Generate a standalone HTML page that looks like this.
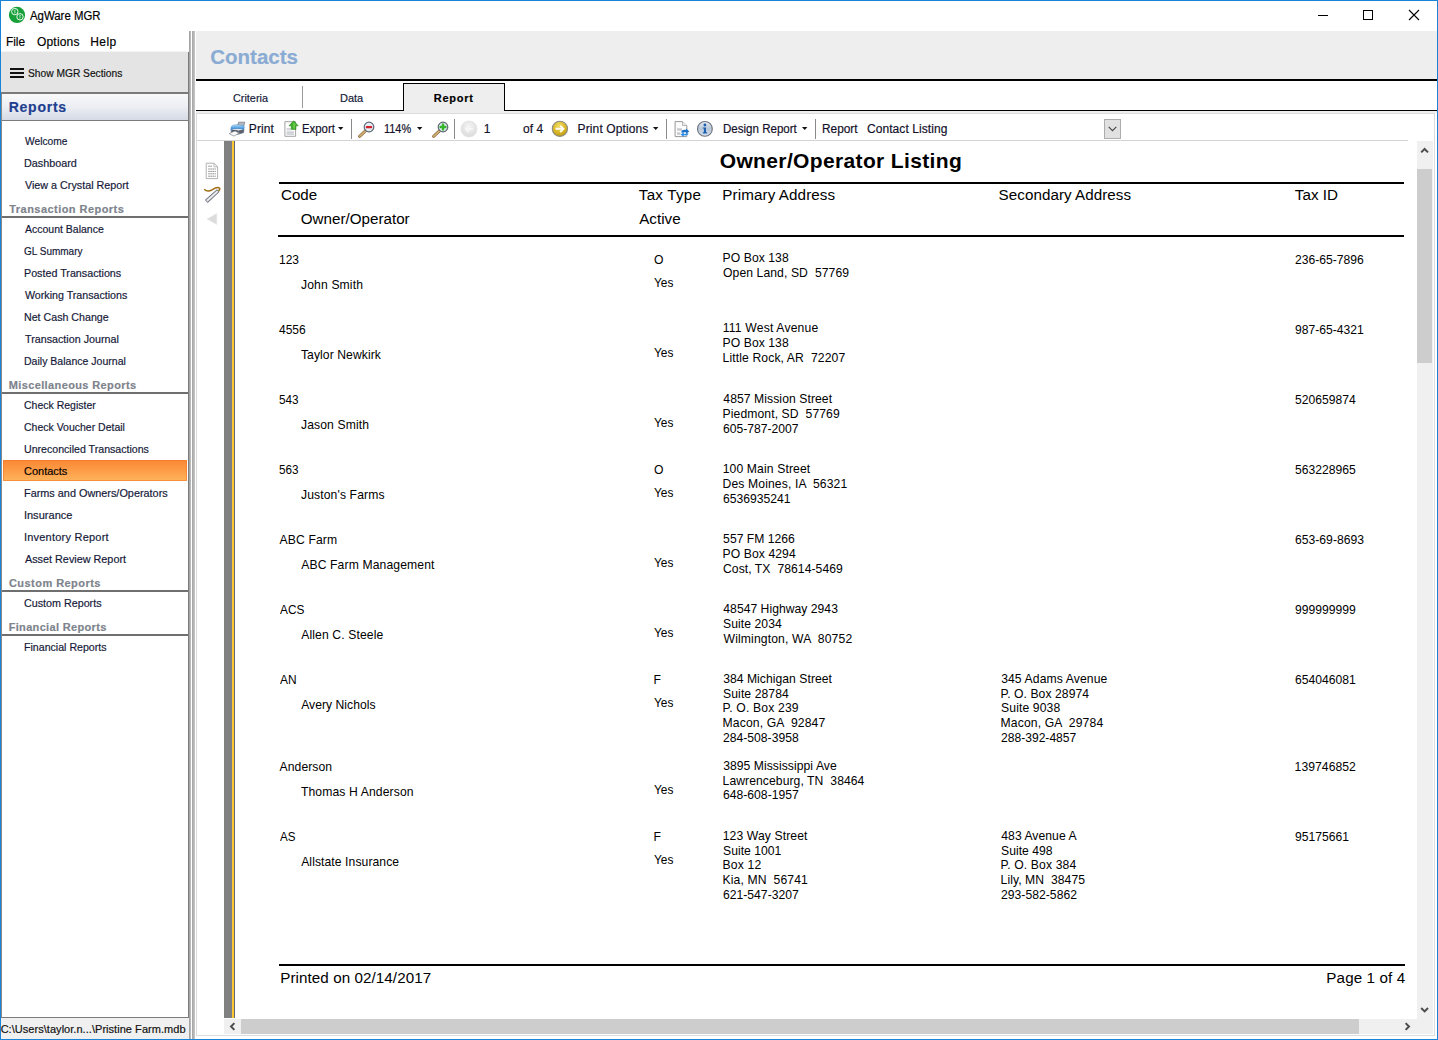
<!DOCTYPE html><html><head><meta charset="utf-8"><title>AgWare MGR</title><style>
html,body{margin:0;padding:0;}body{width:1438px;height:1040px;position:relative;overflow:hidden;background:#fff;font-family:"Liberation Sans", sans-serif;}
.t{position:absolute;white-space:pre;transform-origin:0 0;-webkit-text-stroke:0.18px;}.b{position:absolute;}svg{position:absolute;overflow:visible;}
</style></head><body>
<span class="t" style="left:30.38px;top:9px;font-size:12px;line-height:14px;color:#000;transform:scaleX(0.9501);">AgWare MGR</span>
<svg style="left:8px;top:6px" width="18" height="18" viewBox="0 0 18 18"><circle cx="9" cy="8.9" r="8.1" fill="#17a03a"/><circle cx="6.8" cy="5.6" r="3.2" fill="none" stroke="#eaf7ec" stroke-width="1"/><circle cx="12" cy="10.8" r="3.2" fill="none" stroke="#eaf7ec" stroke-width="1"/><path d="M7.6 4.4C6.6 3.8 5.8 4.6 6.8 5.6C7.8 6.4 7 7.2 6 6.8M12.8 9.6C11.8 9 11 9.8 12 10.8C13 11.6 12.2 12.4 11.2 12" fill="none" stroke="#d8f0dc" stroke-width=".8"/></svg>
<div class="b" style="left:1318px;top:15px;width:10px;height:1px;background:#000;"></div>
<div class="b" style="left:1363px;top:10px;width:10px;height:10px;background:transparent;border:1px solid #000;box-sizing:border-box;"></div>
<svg style="left:1409px;top:10px" width="10" height="10" viewBox="0 0 10 10"><path d="M0 0L10 10M10 0L0 10" stroke="#000" stroke-width="1.1"/></svg>
<span class="t" style="left:6.43px;top:35px;font-size:12px;line-height:14px;color:#000;transform:scaleX(0.9877);">File</span>
<span class="t" style="left:37.03px;top:35px;font-size:12px;line-height:14px;color:#000;letter-spacing:0.174px;">Options</span>
<span class="t" style="left:90.22px;top:35px;font-size:12px;line-height:14px;color:#000;letter-spacing:0.436px;">Help</span>
<div class="b" style="left:1px;top:51px;width:188px;height:1px;background:#f4f4f4;"></div>
<div class="b" style="left:1px;top:52px;width:187px;height:40px;background:#e4e4e4;"></div>
<div class="b" style="left:1px;top:92px;width:188px;height:2px;background:#7b7b7b;"></div>
<div class="b" style="left:10px;top:68px;width:14px;height:2px;background:#111;"></div>
<div class="b" style="left:10px;top:72px;width:14px;height:2px;background:#111;"></div>
<div class="b" style="left:10px;top:76px;width:14px;height:2px;background:#111;"></div>
<span class="t" style="left:28.14px;top:67px;font-size:11px;line-height:12px;color:#111;transform:scaleX(0.9296);">Show MGR Sections</span>
<div class="b" style="left:2px;top:94px;width:186px;height:26px;background:linear-gradient(#f9f9fa,#eceef3 50%,#d5dae5);"></div>
<div class="b" style="left:1px;top:120px;width:188px;height:1px;background:#7b7b7b;"></div>
<span class="t" style="left:8.76px;top:99px;font-size:14px;line-height:16px;color:#1f3f8f;font-weight:700;letter-spacing:0.736px;">Reports</span>
<div class="b" style="left:1px;top:94px;width:1px;height:923px;background:#8a8a8a;"></div>
<div class="b" style="left:188px;top:52px;width:1px;height:965px;background:#7b7b7b;"></div>
<span class="t" style="left:24.86px;top:135px;font-size:11px;line-height:12px;color:#141838;transform:scaleX(0.9293);">Welcome</span>
<span class="t" style="left:24.01px;top:157px;font-size:11px;line-height:12px;color:#141838;transform:scaleX(0.9808);">Dashboard</span>
<span class="t" style="left:24.85px;top:179px;font-size:11px;line-height:12px;color:#141838;transform:scaleX(0.978);">View a Crystal Report</span>
<span class="t" style="left:9.28px;top:203px;font-size:11px;line-height:12px;color:#7d838c;font-weight:700;letter-spacing:0.456px;">Transaction Reports</span>
<div class="b" style="left:2px;top:216px;width:186px;height:2px;background:#6f6f6f;"></div>
<span class="t" style="left:24.88px;top:223px;font-size:11px;line-height:12px;color:#141838;transform:scaleX(0.9544);">Account Balance</span>
<span class="t" style="left:24.4px;top:245px;font-size:11px;line-height:12px;color:#141838;transform:scaleX(0.9079);">GL Summary</span>
<span class="t" style="left:24.02px;top:267px;font-size:11px;line-height:12px;color:#141838;transform:scaleX(0.975);">Posted Transactions</span>
<span class="t" style="left:24.85px;top:289px;font-size:11px;line-height:12px;color:#141838;transform:scaleX(0.9686);">Working Transactions</span>
<span class="t" style="left:24.03px;top:311px;font-size:11px;line-height:12px;color:#141838;transform:scaleX(0.968);">Net Cash Change</span>
<span class="t" style="left:24.66px;top:333px;font-size:11px;line-height:12px;color:#141838;transform:scaleX(0.9757);">Transaction Journal</span>
<span class="t" style="left:24.04px;top:355px;font-size:11px;line-height:12px;color:#141838;transform:scaleX(0.9575);">Daily Balance Journal</span>
<span class="t" style="left:8.66px;top:379px;font-size:11px;line-height:12px;color:#7d838c;font-weight:700;letter-spacing:0.384px;">Miscellaneous Reports</span>
<div class="b" style="left:2px;top:392px;width:186px;height:2px;background:#6f6f6f;"></div>
<span class="t" style="left:24.37px;top:399px;font-size:11px;line-height:12px;color:#141838;transform:scaleX(0.9536);">Check Register</span>
<span class="t" style="left:24.37px;top:421px;font-size:11px;line-height:12px;color:#141838;transform:scaleX(0.9544);">Check Voucher Detail</span>
<span class="t" style="left:24.08px;top:443px;font-size:11px;line-height:12px;color:#141838;transform:scaleX(0.9637);">Unreconciled Transactions</span>
<div class="b" style="left:3px;top:460px;width:184px;height:21px;background:linear-gradient(#fb8835,#fd9a45 45%,#ffb45c);box-shadow:inset 0 0 0 1px rgba(240,120,40,.6);"></div>
<span class="t" style="left:24.34px;top:465px;font-size:11px;line-height:12px;color:#000;transform:scaleX(0.9987);">Contacts</span>
<span class="t" style="left:24.01px;top:487px;font-size:11px;line-height:12px;color:#141838;transform:scaleX(0.9876);">Farms and Owners/Operators</span>
<span class="t" style="left:23.88px;top:509px;font-size:11px;line-height:12px;color:#141838;letter-spacing:0.037px;">Insurance</span>
<span class="t" style="left:23.88px;top:531px;font-size:11px;line-height:12px;color:#141838;letter-spacing:0.232px;">Inventory Report</span>
<span class="t" style="left:24.88px;top:553px;font-size:11px;line-height:12px;color:#141838;transform:scaleX(0.9834);">Asset Review Report</span>
<span class="t" style="left:8.95px;top:577px;font-size:11px;line-height:12px;color:#7d838c;font-weight:700;letter-spacing:0.457px;">Custom Reports</span>
<div class="b" style="left:2px;top:590px;width:186px;height:2px;background:#6f6f6f;"></div>
<span class="t" style="left:24.36px;top:597px;font-size:11px;line-height:12px;color:#141838;transform:scaleX(0.9756);">Custom Reports</span>
<span class="t" style="left:8.66px;top:621px;font-size:11px;line-height:12px;color:#7d838c;font-weight:700;letter-spacing:0.331px;">Financial Reports</span>
<div class="b" style="left:2px;top:634px;width:186px;height:2px;background:#6f6f6f;"></div>
<span class="t" style="left:24.03px;top:641px;font-size:11px;line-height:12px;color:#141838;transform:scaleX(0.9645);">Financial Reports</span>
<div class="b" style="left:1px;top:1017px;width:188px;height:1px;background:#7b7b7b;"></div>
<div class="b" style="left:1px;top:1018px;width:188px;height:21px;background:#f0f0f0;"></div>
<span class="t" style="left:0.64px;top:1023px;font-size:11px;line-height:12px;color:#111;letter-spacing:0.041px;">C:\Users\taylor.n...\Pristine Farm.mdb</span>
<div class="b" style="left:189px;top:31px;width:2px;height:1008px;background:linear-gradient(90deg,#9a9a9a,#c4c4c4);"></div>
<div class="b" style="left:192px;top:31px;width:3px;height:1008px;background:linear-gradient(90deg,#a4a4a4,#c8c8c8);"></div>
<div class="b" style="left:196px;top:31px;width:1241px;height:48px;background:#eeeeee;"></div>
<div class="b" style="left:196px;top:79px;width:1241px;height:2px;background:#000;"></div>
<span class="t" style="left:210.16px;top:45px;font-size:20.5px;line-height:23px;color:#8aabd3;font-weight:700;letter-spacing:0.011px;">Contacts</span>
<div class="b" style="left:196px;top:110px;width:208px;height:1px;background:#000;"></div>
<div class="b" style="left:504px;top:110px;width:933px;height:1px;background:#000;"></div>
<div class="b" style="left:302px;top:86px;width:1px;height:22px;background:#9a9a9a;"></div>
<div class="b" style="left:403px;top:83px;width:102px;height:30px;background:#eeeeee;border:1px solid #000;border-bottom:none;box-sizing:border-box;"></div>
<div class="b" style="left:196px;top:111px;width:1241px;height:2px;background:#eeeeee;"></div>
<span class="t" style="left:233.25px;top:92px;font-size:11px;line-height:12px;color:#141838;transform:scaleX(0.9859);">Criteria</span>
<span class="t" style="left:339.9px;top:92px;font-size:11px;line-height:12px;color:#141838;transform:scaleX(0.9985);">Data</span>
<span class="t" style="left:433.76px;top:92px;font-size:11px;line-height:12px;color:#000;font-weight:700;letter-spacing:0.765px;">Report</span>
<div class="b" style="left:196px;top:113px;width:1239px;height:923px;background:transparent;border:1px solid #dcdcdc;box-sizing:border-box;"></div>
<div class="b" style="left:197px;top:140px;width:1211px;height:1px;background:#d4d4d4;"></div>
<svg style="left:228px;top:121px" width="18" height="16" viewBox="0 0 18 16"><defs><linearGradient id="pb" x1="0" y1="0" x2="0" y2="1"><stop offset="0" stop-color="#b5dcf8"/><stop offset=".45" stop-color="#6db3ea"/><stop offset="1" stop-color="#2f80cc"/></linearGradient></defs><path d="M10.6 1.2H16.8L15.7 5.2H9.5Z" fill="#b3b7be" stroke="#7b8089" stroke-width=".8"/><path d="M3 8.2C7 6.8 12 7 15.9 8.1L15.6 11.6L9.8 13.4L3.3 11.8Z" fill="#e6eaf0" stroke="#5f6672" stroke-width=".7"/><path d="M10.6 9.4L15.8 8.4L15.5 11.5L10.2 13.1Z" fill="#59606c"/><path d="M3.3 9.4C6 8.8 9 9 10.8 10L10.3 12.4L3.5 11.3Z" fill="#434a57"/><path d="M3 6.4C3.4 4.4 6 3.5 9.2 3.7C12.6 3.9 15.8 4.4 16.4 5.6L15.9 8.5C12 7.3 7 7.1 2.9 8.7Z" fill="url(#pb)" stroke="#3f82c4" stroke-width=".4"/><path d="M1.1 12.6L7 9.9L11.1 12L6 15.1Z" fill="#fcfcfc" stroke="#8b9098" stroke-width=".8"/></svg>
<span class="t" style="left:248.82px;top:122px;font-size:12px;line-height:14px;color:#12102a;letter-spacing:0.1px;">Print</span>
<svg style="left:284px;top:120px" width="15" height="18" viewBox="0 0 15 18"><path d="M.9 1.7H11.6V16.3H.9Z" fill="#fdfdfd" stroke="#a3a3a3" stroke-width="1"/><rect x="2.6" y="8" width="4.4" height="2.4" fill="#d4d6da"/><rect x="2.6" y="11.4" width="7.4" height="3.4" fill="#c9ccd1"/><rect x="2.6" y="12.8" width="7.4" height=".6" fill="#e6e8ea"/><path d="M9.6 .8L14.2 5.8H11.9V9.4H7.3V5.8H5Z" fill="#3fae2a" stroke="#2a8a1c" stroke-width=".6"/><path d="M9.6 2.2L12.2 5.2H10.9V8.4H9.2V3Z" fill="#7ed957" opacity=".7"/></svg>
<span class="t" style="left:301.67px;top:122px;font-size:12px;line-height:14px;color:#12102a;transform:scaleX(0.9462);">Export</span>
<svg style="left:337.5px;top:127px" width="6" height="3" viewBox="0 0 6 3"><path d="M0 0H5.4L2.7 3Z" fill="#111"/></svg>
<div class="b" style="left:351px;top:119px;width:1px;height:20px;background:#8a8a8a;"></div>
<svg style="left:357.5px;top:120.5px" width="17" height="17" viewBox="0 0 17 17"><path d="M7.2 10.2L1.6 15.3" stroke="#8a6a38" stroke-width="3" stroke-linecap="round"/><path d="M7.2 10.2L1.8 15.1" stroke="#d4b078" stroke-width="1.6" stroke-linecap="round"/><circle cx="11" cy="6" r="4.8" fill="#e4ecf4" stroke="#5f6773" stroke-width="1.2"/><rect x="7.8" y="4.9" width="6.4" height="2.3" rx=".8" fill="#d2202c"/></svg>
<span class="t" style="left:384.17px;top:122px;font-size:12px;line-height:14px;color:#12102a;transform:scaleX(0.9097);">114%</span>
<svg style="left:416.8px;top:127px" width="6" height="3" viewBox="0 0 6 3"><path d="M0 0H5.4L2.7 3Z" fill="#111"/></svg>
<svg style="left:431.5px;top:120.5px" width="17" height="17" viewBox="0 0 17 17"><path d="M7.2 10.2L1.6 15.3" stroke="#8a6a38" stroke-width="3" stroke-linecap="round"/><path d="M7.2 10.2L1.8 15.1" stroke="#d4b078" stroke-width="1.6" stroke-linecap="round"/><circle cx="11" cy="6" r="4.8" fill="#e4ecf4" stroke="#5f6773" stroke-width="1.2"/><path d="M9.8 2.5H12.2V4.8H14.5V7.2H12.2V9.5H9.8V7.2H7.5V4.8H9.8Z" fill="#35b52a"/></svg>
<div class="b" style="left:454px;top:119px;width:1px;height:20px;background:#8a8a8a;"></div>
<svg style="left:460px;top:120px" width="18" height="18" viewBox="0 0 18 18"><defs><radialGradient id="gb" cx=".5" cy=".35" r=".7"><stop offset="0" stop-color="#f4f4f4"/><stop offset="1" stop-color="#d9d9d9"/></radialGradient></defs><circle cx="9" cy="9" r="8" fill="url(#gb)" stroke="#e2e2e2" stroke-width=".8"/><path d="M12.6 9H6.2M8.8 6L5.8 9L8.8 12" fill="none" stroke="#f6f6f6" stroke-width="1.8"/></svg>
<span class="t" style="left:483.69px;top:122px;font-size:12px;line-height:14px;color:#12102a;">1</span>
<span class="t" style="left:523.1px;top:122px;font-size:12px;line-height:14px;color:#12102a;letter-spacing:0.013px;">of 4</span>
<svg style="left:551px;top:120px" width="18" height="18" viewBox="0 0 18 18"><defs><radialGradient id="gg" cx=".45" cy=".3" r=".75"><stop offset="0" stop-color="#f1dc62"/><stop offset=".6" stop-color="#d9b526"/><stop offset="1" stop-color="#b8950f"/></radialGradient></defs><circle cx="8.9" cy="8.8" r="7.6" fill="url(#gg)" stroke="#8d8c80" stroke-width="1.1"/><path d="M4.6 8.8H12M9.2 5.6L12.4 8.8L9.2 12" fill="none" stroke="#fffef4" stroke-width="1.9"/></svg>
<span class="t" style="left:577.62px;top:122px;font-size:12px;line-height:14px;color:#12102a;letter-spacing:0.113px;">Print Options</span>
<svg style="left:652.6px;top:127px" width="6" height="3" viewBox="0 0 6 3"><path d="M0 0H5.4L2.7 3Z" fill="#111"/></svg>
<div class="b" style="left:666px;top:119px;width:1px;height:20px;background:#8a8a8a;"></div>
<svg style="left:674px;top:121px" width="16" height="17" viewBox="0 0 16 17"><path d="M1.1 .6H8.5L12.8 4.5V15.6H1.1Z" fill="#fcfcfc" stroke="#989898" stroke-width="1"/><path d="M8.5 .6V4.5H12.8" fill="#f0f0f0" stroke="#a4a4a4" stroke-width=".8"/><rect x="3" y="7.3" width="4.9" height="2.3" fill="#c4c6ca"/><rect x="3" y="11.3" width="3.4" height="2.6" fill="#c9cbce"/><path d="M7.6 9.6C9 8.7 10.8 8.6 12.2 8.9V7.6L15.3 10.4L12.2 12.8V11.4C10.6 11 9 11.2 7.6 12Z" fill="#1b6ec6"/><path d="M14.2 13.6C12.8 14.5 11 14.6 9.8 14.3V16L6.6 13.6L9.8 11.3V12.7C11.2 12.9 12.8 12.6 14.2 11.9Z" fill="#2f8fe6"/></svg>
<svg style="left:696px;top:120px" width="18" height="18" viewBox="0 0 18 18"><defs><linearGradient id="gi" x1="0" y1="0" x2="0" y2="1"><stop offset="0" stop-color="#e8edf3"/><stop offset=".5" stop-color="#b7c5d6"/><stop offset="1" stop-color="#dde4ec"/></linearGradient></defs><circle cx="8.9" cy="8.9" r="7.4" fill="url(#gi)" stroke="#6c747f" stroke-width="1.1"/><circle cx="8.9" cy="5" r="1.4" fill="#1a5fb0"/><path d="M6.8 7.4H10V12.2H11.2V13.4H6.8V12.2H7.9V8.6H6.8Z" fill="#1a5fb0"/></svg>
<span class="t" style="left:722.85px;top:122px;font-size:12px;line-height:14px;color:#12102a;transform:scaleX(0.9625);">Design Report</span>
<svg style="left:801.6px;top:127px" width="6" height="3" viewBox="0 0 6 3"><path d="M0 0H5.4L2.7 3Z" fill="#111"/></svg>
<div class="b" style="left:815px;top:119px;width:1px;height:20px;background:#8a8a8a;"></div>
<span class="t" style="left:822.43px;top:122px;font-size:12px;line-height:14px;color:#12102a;transform:scaleX(0.9873);">Report</span>
<span class="t" style="left:866.99px;top:122px;font-size:12px;line-height:14px;color:#12102a;letter-spacing:0.072px;">Contact Listing</span>
<div class="b" style="left:1104px;top:119px;width:17px;height:20px;background:#e1e1e1;border:1px solid #adadad;box-sizing:border-box;"></div>
<svg style="left:1108px;top:126px" width="9" height="6" viewBox="0 0 9 6"><path d="M.7 .8L4.5 4.6L8.3 .8" fill="none" stroke="#444" stroke-width="1.1"/></svg>
<svg style="left:205px;top:162px" width="14" height="18" viewBox="0 0 14 18"><path d="M1.2 1.2H9L12.6 4.8V16.6H1.2Z" fill="#fff" stroke="#a8a8a8" stroke-width=".9"/><path d="M9 1.2V4.8H12.6" fill="none" stroke="#a8a8a8" stroke-width=".8"/><path d="M3.2 4.2H7.4M3.2 7H10.8M3.2 9.4H10.8M3.2 11.8H10.8M3.2 14.2H10.8" stroke="#8c8c8c" stroke-width="1" stroke-dasharray="1.6 .5"/></svg>
<svg style="left:203px;top:185px" width="18" height="19" viewBox="0 0 18 19"><path d="M16.2 6.6L14 4.8L2.4 15L4.8 17.4Z" fill="#c4c8cf" stroke="#565c66" stroke-width=".9"/><path d="M14.6 6.2L4 15.6" stroke="#f2f3f5" stroke-width="1.2"/><path d="M1.2 4.2C3 6 6.2 6.4 9 4.8C11.6 3.2 14.8 1.4 16.6 3.2C17.2 4 16.4 5.4 15.4 5.6" fill="none" stroke="#a06c14" stroke-width="1.5"/></svg>
<svg style="left:206px;top:212px" width="12" height="14" viewBox="0 0 12 14"><path d="M1 7L10.8 1.4V12.4Z" fill="#dcdcdc" stroke="#e8e8e8" stroke-width=".6"/></svg>
<div class="b" style="left:224px;top:141px;width:8px;height:877px;background:#808080;"></div>
<div class="b" style="left:231px;top:141px;width:1px;height:877px;background:#7a7e88;"></div>
<div class="b" style="left:232px;top:141px;width:2px;height:877px;background:#fdc832;"></div>
<div class="b" style="left:234px;top:141px;width:1px;height:877px;background:#66666e;"></div>
<span class="t" style="left:719.74px;top:149px;font-size:21px;line-height:23px;color:#000;font-weight:700;letter-spacing:0.359px;-webkit-text-stroke:0;">Owner/Operator Listing</span>
<div class="b" style="left:279px;top:182px;width:1125px;height:2px;background:#000;"></div>
<div class="b" style="left:278px;top:235px;width:1126px;height:2px;background:#000;"></div>
<div class="b" style="left:279px;top:964px;width:1126px;height:2px;background:#000;"></div>
<span class="t" style="left:281.03px;top:186px;font-size:15.2px;line-height:17px;color:#000;transform:scaleX(0.9945);-webkit-text-stroke:0;">Code</span>
<span class="t" style="left:300.78px;top:210px;font-size:15.2px;line-height:17px;color:#000;-webkit-text-stroke:0;">Owner/Operator</span>
<span class="t" style="left:638.86px;top:186px;font-size:15.2px;line-height:17px;color:#000;letter-spacing:0.209px;-webkit-text-stroke:0;">Tax Type</span>
<span class="t" style="left:639.17px;top:210px;font-size:15.2px;line-height:17px;color:#000;letter-spacing:0.023px;-webkit-text-stroke:0;">Active</span>
<span class="t" style="left:722.35px;top:186px;font-size:15.2px;line-height:17px;color:#000;letter-spacing:0.097px;-webkit-text-stroke:0;">Primary Address</span>
<span class="t" style="left:998.61px;top:186px;font-size:15.2px;line-height:17px;color:#000;letter-spacing:0.049px;-webkit-text-stroke:0;">Secondary Address</span>
<span class="t" style="left:1294.86px;top:186px;font-size:15.2px;line-height:17px;color:#000;letter-spacing:0.021px;-webkit-text-stroke:0;">Tax ID</span>
<span class="t" style="left:280.25px;top:969px;font-size:15.2px;line-height:17px;color:#000;letter-spacing:0.071px;-webkit-text-stroke:0;">Printed on 02/14/2017</span>
<span class="t" style="left:1326.35px;top:969px;font-size:15.2px;line-height:17px;color:#000;letter-spacing:0.114px;-webkit-text-stroke:0;">Page 1 of 4</span>
<span class="t" style="left:278.68px;top:253px;font-size:12.16px;line-height:14px;color:#000;transform:scaleX(0.9879);-webkit-text-stroke:0;">123</span>
<span class="t" style="left:301.01px;top:278px;font-size:12.16px;line-height:14px;color:#000;letter-spacing:0.128px;-webkit-text-stroke:0;">John Smith</span>
<span class="t" style="left:654.02px;top:253px;font-size:12.16px;line-height:14px;color:#000;-webkit-text-stroke:0;">O</span>
<span class="t" style="left:654.14px;top:276px;font-size:12.16px;line-height:14px;color:#000;transform:scaleX(0.9779);-webkit-text-stroke:0;">Yes</span>
<span class="t" style="left:722.6px;top:251px;font-size:12.16px;line-height:14px;color:#000;letter-spacing:0.062px;-webkit-text-stroke:0;">PO Box 138</span>
<span class="t" style="left:723.02px;top:266px;font-size:12.16px;line-height:14px;color:#000;letter-spacing:0.087px;-webkit-text-stroke:0;">Open Land, SD  57769</span>
<span class="t" style="left:1294.89px;top:253px;font-size:12.16px;line-height:14px;color:#000;transform:scaleX(0.9968);-webkit-text-stroke:0;">236-65-7896</span>
<span class="t" style="left:279.32px;top:323px;font-size:12.16px;line-height:14px;color:#000;transform:scaleX(0.9871);-webkit-text-stroke:0;">4556</span>
<span class="t" style="left:300.93px;top:348px;font-size:12.16px;line-height:14px;color:#000;letter-spacing:0.074px;-webkit-text-stroke:0;">Taylor Newkirk</span>
<span class="t" style="left:654.14px;top:346px;font-size:12.16px;line-height:14px;color:#000;transform:scaleX(0.9779);-webkit-text-stroke:0;">Yes</span>
<span class="t" style="left:722.67px;top:321px;font-size:12.16px;line-height:14px;color:#000;letter-spacing:0.184px;-webkit-text-stroke:0;">111 West Avenue</span>
<span class="t" style="left:722.6px;top:336px;font-size:12.16px;line-height:14px;color:#000;letter-spacing:0.062px;-webkit-text-stroke:0;">PO Box 138</span>
<span class="t" style="left:722.6px;top:351px;font-size:12.16px;line-height:14px;color:#000;letter-spacing:0.111px;-webkit-text-stroke:0;">Little Rock, AR  72207</span>
<span class="t" style="left:1294.93px;top:323px;font-size:12.16px;line-height:14px;color:#000;transform:scaleX(0.997);-webkit-text-stroke:0;">987-65-4321</span>
<span class="t" style="left:279.13px;top:393px;font-size:12.16px;line-height:14px;color:#000;transform:scaleX(0.9654);-webkit-text-stroke:0;">543</span>
<span class="t" style="left:301.01px;top:418px;font-size:12.16px;line-height:14px;color:#000;letter-spacing:0.107px;-webkit-text-stroke:0;">Jason Smith</span>
<span class="t" style="left:654.14px;top:416px;font-size:12.16px;line-height:14px;color:#000;transform:scaleX(0.9779);-webkit-text-stroke:0;">Yes</span>
<span class="t" style="left:723.32px;top:392px;font-size:12.16px;line-height:14px;color:#000;letter-spacing:0.072px;-webkit-text-stroke:0;">4857 Mission Street</span>
<span class="t" style="left:722.6px;top:407px;font-size:12.16px;line-height:14px;color:#000;letter-spacing:0.088px;-webkit-text-stroke:0;">Piedmont, SD  57769</span>
<span class="t" style="left:722.98px;top:422px;font-size:12.16px;line-height:14px;color:#000;transform:scaleX(0.9987);-webkit-text-stroke:0;">605-787-2007</span>
<span class="t" style="left:1295.01px;top:393px;font-size:12.16px;line-height:14px;color:#000;transform:scaleX(0.9963);-webkit-text-stroke:0;">520659874</span>
<span class="t" style="left:279.13px;top:463px;font-size:12.16px;line-height:14px;color:#000;transform:scaleX(0.9654);-webkit-text-stroke:0;">563</span>
<span class="t" style="left:301.01px;top:488px;font-size:12.16px;line-height:14px;color:#000;letter-spacing:0.113px;-webkit-text-stroke:0;">Juston's Farms</span>
<span class="t" style="left:654.02px;top:463px;font-size:12.16px;line-height:14px;color:#000;-webkit-text-stroke:0;">O</span>
<span class="t" style="left:654.14px;top:486px;font-size:12.16px;line-height:14px;color:#000;transform:scaleX(0.9779);-webkit-text-stroke:0;">Yes</span>
<span class="t" style="left:722.67px;top:462px;font-size:12.16px;line-height:14px;color:#000;letter-spacing:0.126px;-webkit-text-stroke:0;">100 Main Street</span>
<span class="t" style="left:722.6px;top:477px;font-size:12.16px;line-height:14px;color:#000;letter-spacing:0.114px;-webkit-text-stroke:0;">Des Moines, IA  56321</span>
<span class="t" style="left:722.98px;top:492px;font-size:12.16px;line-height:14px;color:#000;transform:scaleX(0.9997);-webkit-text-stroke:0;">6536935241</span>
<span class="t" style="left:1295.01px;top:463px;font-size:12.16px;line-height:14px;color:#000;transform:scaleX(0.9989);-webkit-text-stroke:0;">563228965</span>
<span class="t" style="left:279.58px;top:533px;font-size:12.16px;line-height:14px;color:#000;letter-spacing:0.111px;-webkit-text-stroke:0;">ABC Farm</span>
<span class="t" style="left:301.18px;top:558px;font-size:12.16px;line-height:14px;color:#000;letter-spacing:0.123px;-webkit-text-stroke:0;">ABC Farm Management</span>
<span class="t" style="left:654.14px;top:556px;font-size:12.16px;line-height:14px;color:#000;transform:scaleX(0.9779);-webkit-text-stroke:0;">Yes</span>
<span class="t" style="left:723.11px;top:532px;font-size:12.16px;line-height:14px;color:#000;letter-spacing:0.007px;-webkit-text-stroke:0;">557 FM 1266</span>
<span class="t" style="left:722.6px;top:547px;font-size:12.16px;line-height:14px;color:#000;letter-spacing:0.082px;-webkit-text-stroke:0;">PO Box 4294</span>
<span class="t" style="left:722.98px;top:562px;font-size:12.16px;line-height:14px;color:#000;letter-spacing:0.059px;-webkit-text-stroke:0;">Cost, TX  78614-5469</span>
<span class="t" style="left:1294.88px;top:533px;font-size:12.16px;line-height:14px;color:#000;letter-spacing:0.029px;-webkit-text-stroke:0;">653-69-8693</span>
<span class="t" style="left:279.58px;top:603px;font-size:12.16px;line-height:14px;color:#000;transform:scaleX(0.9746);-webkit-text-stroke:0;">ACS</span>
<span class="t" style="left:301.18px;top:628px;font-size:12.16px;line-height:14px;color:#000;letter-spacing:0.116px;-webkit-text-stroke:0;">Allen C. Steele</span>
<span class="t" style="left:654.14px;top:626px;font-size:12.16px;line-height:14px;color:#000;transform:scaleX(0.9779);-webkit-text-stroke:0;">Yes</span>
<span class="t" style="left:723.32px;top:602px;font-size:12.16px;line-height:14px;color:#000;letter-spacing:0.021px;-webkit-text-stroke:0;">48547 Highway 2943</span>
<span class="t" style="left:723.05px;top:617px;font-size:12.16px;line-height:14px;color:#000;letter-spacing:0.062px;-webkit-text-stroke:0;">Suite 2034</span>
<span class="t" style="left:723.55px;top:632px;font-size:12.16px;line-height:14px;color:#000;letter-spacing:0.135px;-webkit-text-stroke:0;">Wilmington, WA  80752</span>
<span class="t" style="left:1294.93px;top:603px;font-size:12.16px;line-height:14px;color:#000;letter-spacing:0.01px;-webkit-text-stroke:0;">999999999</span>
<span class="t" style="left:279.58px;top:673px;font-size:12.16px;line-height:14px;color:#000;transform:scaleX(0.9826);-webkit-text-stroke:0;">AN</span>
<span class="t" style="left:301.18px;top:698px;font-size:12.16px;line-height:14px;color:#000;letter-spacing:0.019px;-webkit-text-stroke:0;">Avery Nichols</span>
<span class="t" style="left:653.6px;top:673px;font-size:12.16px;line-height:14px;color:#000;-webkit-text-stroke:0;">F</span>
<span class="t" style="left:654.14px;top:696px;font-size:12.16px;line-height:14px;color:#000;transform:scaleX(0.9779);-webkit-text-stroke:0;">Yes</span>
<span class="t" style="left:723.14px;top:672px;font-size:12.16px;line-height:14px;color:#000;letter-spacing:0.039px;-webkit-text-stroke:0;">384 Michigan Street</span>
<span class="t" style="left:723.05px;top:687px;font-size:12.16px;line-height:14px;color:#000;letter-spacing:0.09px;-webkit-text-stroke:0;">Suite 28784</span>
<span class="t" style="left:722.6px;top:701px;font-size:12.16px;line-height:14px;color:#000;letter-spacing:0.156px;-webkit-text-stroke:0;">P. O. Box 239</span>
<span class="t" style="left:722.6px;top:716px;font-size:12.16px;line-height:14px;color:#000;letter-spacing:0.128px;-webkit-text-stroke:0;">Macon, GA  92847</span>
<span class="t" style="left:722.99px;top:731px;font-size:12.16px;line-height:14px;color:#000;letter-spacing:0.001px;-webkit-text-stroke:0;">284-508-3958</span>
<span class="t" style="left:1001.14px;top:672px;font-size:12.16px;line-height:14px;color:#000;letter-spacing:0.111px;-webkit-text-stroke:0;">345 Adams Avenue</span>
<span class="t" style="left:1000.6px;top:687px;font-size:12.16px;line-height:14px;color:#000;letter-spacing:0.059px;-webkit-text-stroke:0;">P. O. Box 28974</span>
<span class="t" style="left:1001.05px;top:701px;font-size:12.16px;line-height:14px;color:#000;letter-spacing:0.115px;-webkit-text-stroke:0;">Suite 9038</span>
<span class="t" style="left:1000.6px;top:716px;font-size:12.16px;line-height:14px;color:#000;letter-spacing:0.124px;-webkit-text-stroke:0;">Macon, GA  29784</span>
<span class="t" style="left:1000.99px;top:731px;font-size:12.16px;line-height:14px;color:#000;transform:scaleX(0.9946);-webkit-text-stroke:0;">288-392-4857</span>
<span class="t" style="left:1294.88px;top:673px;font-size:12.16px;line-height:14px;color:#000;letter-spacing:0.018px;-webkit-text-stroke:0;">654046081</span>
<span class="t" style="left:279.58px;top:760px;font-size:12.16px;line-height:14px;color:#000;letter-spacing:0.066px;-webkit-text-stroke:0;">Anderson</span>
<span class="t" style="left:300.93px;top:785px;font-size:12.16px;line-height:14px;color:#000;letter-spacing:0.115px;-webkit-text-stroke:0;">Thomas H Anderson</span>
<span class="t" style="left:654.14px;top:783px;font-size:12.16px;line-height:14px;color:#000;transform:scaleX(0.9779);-webkit-text-stroke:0;">Yes</span>
<span class="t" style="left:723.14px;top:759px;font-size:12.16px;line-height:14px;color:#000;letter-spacing:0.051px;-webkit-text-stroke:0;">3895 Mississippi Ave</span>
<span class="t" style="left:722.6px;top:774px;font-size:12.16px;line-height:14px;color:#000;letter-spacing:0.066px;-webkit-text-stroke:0;">Lawrenceburg, TN  38464</span>
<span class="t" style="left:722.98px;top:788px;font-size:12.16px;line-height:14px;color:#000;letter-spacing:0.009px;-webkit-text-stroke:0;">648-608-1957</span>
<span class="t" style="left:1294.57px;top:760px;font-size:12.16px;line-height:14px;color:#000;letter-spacing:0.059px;-webkit-text-stroke:0;">139746852</span>
<span class="t" style="left:279.58px;top:830px;font-size:12.16px;line-height:14px;color:#000;transform:scaleX(0.9527);-webkit-text-stroke:0;">AS</span>
<span class="t" style="left:301.18px;top:855px;font-size:12.16px;line-height:14px;color:#000;letter-spacing:0.077px;-webkit-text-stroke:0;">Allstate Insurance</span>
<span class="t" style="left:653.6px;top:830px;font-size:12.16px;line-height:14px;color:#000;-webkit-text-stroke:0;">F</span>
<span class="t" style="left:654.14px;top:853px;font-size:12.16px;line-height:14px;color:#000;transform:scaleX(0.9779);-webkit-text-stroke:0;">Yes</span>
<span class="t" style="left:722.67px;top:829px;font-size:12.16px;line-height:14px;color:#000;letter-spacing:0.116px;-webkit-text-stroke:0;">123 Way Street</span>
<span class="t" style="left:723.05px;top:844px;font-size:12.16px;line-height:14px;color:#000;letter-spacing:0.022px;-webkit-text-stroke:0;">Suite 1001</span>
<span class="t" style="left:722.6px;top:858px;font-size:12.16px;line-height:14px;color:#000;letter-spacing:0.17px;-webkit-text-stroke:0;">Box 12</span>
<span class="t" style="left:722.6px;top:873px;font-size:12.16px;line-height:14px;color:#000;letter-spacing:0.106px;-webkit-text-stroke:0;">Kia, MN  56741</span>
<span class="t" style="left:722.98px;top:888px;font-size:12.16px;line-height:14px;color:#000;letter-spacing:0.009px;-webkit-text-stroke:0;">621-547-3207</span>
<span class="t" style="left:1001.32px;top:829px;font-size:12.16px;line-height:14px;color:#000;letter-spacing:0.037px;-webkit-text-stroke:0;">483 Avenue A</span>
<span class="t" style="left:1001.05px;top:844px;font-size:12.16px;line-height:14px;color:#000;letter-spacing:0.012px;-webkit-text-stroke:0;">Suite 498</span>
<span class="t" style="left:1000.6px;top:858px;font-size:12.16px;line-height:14px;color:#000;letter-spacing:0.121px;-webkit-text-stroke:0;">P. O. Box 384</span>
<span class="t" style="left:1000.6px;top:873px;font-size:12.16px;line-height:14px;color:#000;letter-spacing:0.059px;-webkit-text-stroke:0;">Lily, MN  38475</span>
<span class="t" style="left:1000.99px;top:888px;font-size:12.16px;line-height:14px;color:#000;letter-spacing:0.027px;-webkit-text-stroke:0;">293-582-5862</span>
<span class="t" style="left:1294.93px;top:830px;font-size:12.16px;line-height:14px;color:#000;transform:scaleX(0.9993);-webkit-text-stroke:0;">95175661</span>
<div class="b" style="left:1417px;top:141px;width:16px;height:878px;background:#f0f0f0;"></div>
<div class="b" style="left:1417px;top:169px;width:15px;height:194px;background:#cdcdcd;"></div>
<div class="b" style="left:224px;top:1019px;width:1209px;height:15px;background:#f0f0f0;"></div>
<div class="b" style="left:241px;top:1019px;width:1118px;height:15px;background:#cdcdcd;"></div>
<svg style="left:1420px;top:146px" width="9" height="9" viewBox="0 0 9 9"><path d="M1.2 6.4L4.6 3L8 6.4" fill="none" stroke="#4d4d4d" stroke-width="2"/></svg>
<svg style="left:1420px;top:1005px" width="9" height="9" viewBox="0 0 9 9"><path d="M1.2 3L4.6 6.4L8 3" fill="none" stroke="#4d4d4d" stroke-width="2"/></svg>
<svg style="left:228px;top:1022px" width="9" height="9" viewBox="0 0 9 9"><path d="M6.4 1.1L3 4.5L6.4 7.9" fill="none" stroke="#4d4d4d" stroke-width="2"/></svg>
<svg style="left:1403px;top:1022px" width="9" height="9" viewBox="0 0 9 9"><path d="M2.6 1.1L6 4.5L2.6 7.9" fill="none" stroke="#4d4d4d" stroke-width="2"/></svg>
<div class="b" style="left:0px;top:0px;width:1438px;height:1px;background:#1883d7;"></div>
<div class="b" style="left:0px;top:0px;width:1px;height:1040px;background:#1883d7;"></div>
<div class="b" style="left:1437px;top:0px;width:1px;height:1040px;background:#1883d7;"></div>
<div class="b" style="left:0px;top:1039px;width:1438px;height:1px;background:#1883d7;"></div>
</body></html>
